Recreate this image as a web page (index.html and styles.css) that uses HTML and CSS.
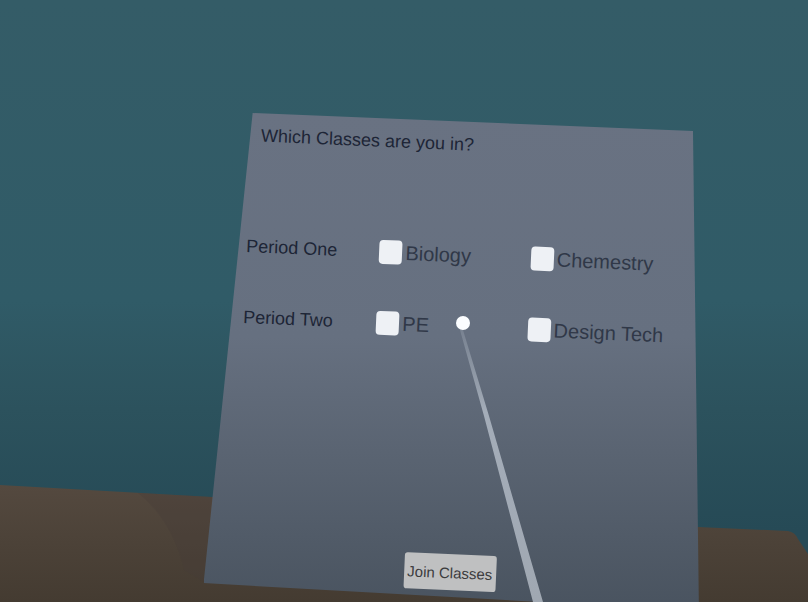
FILE: index.html
```html
<!DOCTYPE html>
<html lang="en">
<head>
    <meta charset="UTF-8">
    <meta name="viewport" content="width=device-width, initial-scale=1.0">
    <title>Join Classes</title>
    <link rel="stylesheet" href="styles.css">
</head>
<body>
    <main class="scene">
        <!-- wall and table -->
        <svg class="backdrop" viewBox="0 0 808 602" preserveAspectRatio="none" aria-hidden="true">
            <defs>
                <linearGradient id="wall" x1="0" y1="0" x2="0" y2="1">
                    <stop offset="0" stop-color="#345c67"/>
                    <stop offset="0.5" stop-color="#305b67"/>
                    <stop offset="0.68" stop-color="#2c525d"/>
                    <stop offset="0.88" stop-color="#264a56"/>
                </linearGradient>
                <linearGradient id="table" x1="0" y1="0" x2="0" y2="1">
                    <stop offset="0" stop-color="#54493f"/>
                    <stop offset="1" stop-color="#443b31"/>
                </linearGradient>
            </defs>
            <rect width="808" height="602" fill="url(#wall)"/>
            <path d="M0 485L212 497L698 527L788 531Q795 532 798 539L808 554V602H0Z" fill="url(#table)"/>
            <path d="M138 493L212 497L204 582L184 570Q172 520 138 493Z" fill="#443c38" opacity="0.3"/>
        </svg>

        <section class="panel">
            <form class="panel-content">
                <h1 class="title">Which Classes are you in?</h1>
                <div class="periods">
                    <h2 class="period">Period One</h2>
                    <label class="option"><input type="checkbox" name="biology">Biology</label>
                    <label class="option"><input type="checkbox" name="chemestry">Chemestry</label>
                    <h2 class="period">Period Two</h2>
                    <label class="option"><input type="checkbox" name="pe">PE</label>
                    <label class="option"><input type="checkbox" name="design-tech">Design Tech</label>
                </div>
                <button class="join" type="button">Join Classes</button>
            </form>
        </section>

        <!-- controller ray and its cursor -->
        <svg class="pointer" viewBox="0 0 808 602" preserveAspectRatio="none" aria-hidden="true">
            <defs>
                <linearGradient id="ray" x1="0" y1="0" x2="0" y2="1">
                    <stop offset="0" stop-color="#a4adb9" stop-opacity="0.3"/>
                    <stop offset="0.3" stop-color="#a4adb9"/>
                    <stop offset="1" stop-color="#a0a8b2"/>
                </linearGradient>
            </defs>
            <path d="M460 330L463 330L489 416L543 602H533L484 416Z" fill="url(#ray)"/>
            <circle cx="463" cy="323" r="7" fill="#fbfdff"/>
        </svg>
    </main>
</body>
</html>
```

FILE: styles.css
```css
* {
    margin: 0;
    padding: 0;
    box-sizing: border-box;
}

body {
    background-color: #305b67;
    font-family: "Liberation Sans", Arial, sans-serif;
    overflow: hidden;
}

.scene {
    position: relative;
    height: 100vh;
    padding: 113px 13.5% 0 25.2%;
    overflow: hidden;
}

.backdrop,
.pointer {
    position: absolute;
    top: 0;
    left: 0;
    width: 100%;
    height: 100%;
}

.pointer {
    pointer-events: none;
}

.panel {
    position: relative;
}

/* the board, seen slightly from the side */
.panel::before {
    content: "";
    position: absolute;
    inset: 0;
    background: linear-gradient(#697282, #667080 45%, #5a6472 68%, #49535f);
    clip-path: polygon(9.9% 0, 98.8% 3.6%, 100% 100%, 0 94.4%);
}

.panel-content {
    display: flex;
    flex-direction: column;
    padding: 6px 0 32px 48px;
    transform: rotate(2.5deg);
    transform-origin: top left;
}

.title,
.period {
    font-size: 18px;
    font-weight: normal;
    line-height: 28px;
    color: #1d2536;
}

.title {
    padding-left: 10px;
}

.periods {
    display: grid;
    grid-template-columns: 133fr 151fr 162fr;
    row-gap: 43px;
    margin-top: 83px;
}

.option {
    display: flex;
    align-items: center;
    gap: 3px;
    font-size: 20px;
    line-height: 28px;
    color: #303848;
    white-space: nowrap;
}

.option input {
    appearance: none;
    width: 23px;
    height: 24px;
    border-radius: 4px;
    background-color: #eef1f5;
}

.option input:checked {
    background-color: #9fb4c8;
}

.join {
    align-self: center;
    margin-top: 214px;
    margin-right: 12px;
    width: 92px;
    height: 36px;
    border: none;
    border-radius: 3px;
    background-color: #bfc0c1;
    font-family: inherit;
    font-size: 15px;
    color: #3b3b3d;
}
```
